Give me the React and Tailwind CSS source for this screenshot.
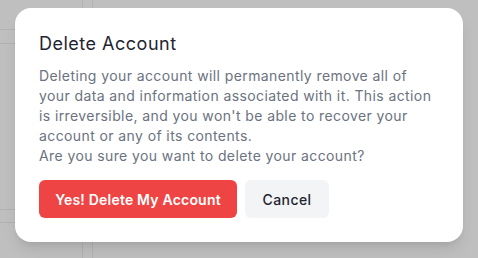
export default function App() {
  return (
    <div className="relative h-[258px] w-[478px] overflow-hidden bg-[#bfbfbf] font-['Inter',sans-serif]">
      {/* faded page behind the overlay */}
      <div className="flex h-full">
        <div className="flex w-[83px] flex-col border-r border-[#b2b2b2]">
          <div className="h-[30px] border-b border-[#b2b2b2]" />
          <div className="h-[14px] border-b border-[#b2b2b2]" />
          <div className="flex-1" />
          <div className="h-[13px] border-t border-[#b2b2b2]" />
          <div className="h-[36px] border-t border-[#b2b2b2]" />
        </div>
        <div className="w-[10px] border-r border-[#b2b2b2]" />
      </div>

      {/* Modal */}
      <div className="absolute inset-0 flex items-start justify-center pt-[8px]">
        <div className="w-[448px] rounded-2xl bg-white px-6 pt-[22px] pb-[24px] shadow-lg">
          <h2 className="text-[18px] leading-[28px] font-normal tracking-[0.5px] text-[#1f2430]">Delete Account</h2>
          <p className="mt-[8px] whitespace-nowrap text-[14px] leading-[20px] tracking-[0.4px] text-[#6b7280]">
            Deleting your account will permanently remove all of
            <br />
            your data and information associated with it. This action
            <br />
            is irreversible, and you won't be able to recover your
            <br />
            account or any of its contents.
            <br />
            Are you sure you want to delete your account?
          </p>
          <div className="mt-[14px] flex gap-2">
            <button className="h-[38px] w-[198px] rounded-md bg-[#ef4444] text-[14px] font-semibold tracking-[0.2px] text-white">
              Yes! Delete My Account
            </button>
            <button className="h-[38px] w-[84px] rounded-md bg-[#f3f4f6] text-[14px] font-medium tracking-[0.4px] text-[#1f2430]">
              Cancel
            </button>
          </div>
        </div>
      </div>
    </div>
  );
}
